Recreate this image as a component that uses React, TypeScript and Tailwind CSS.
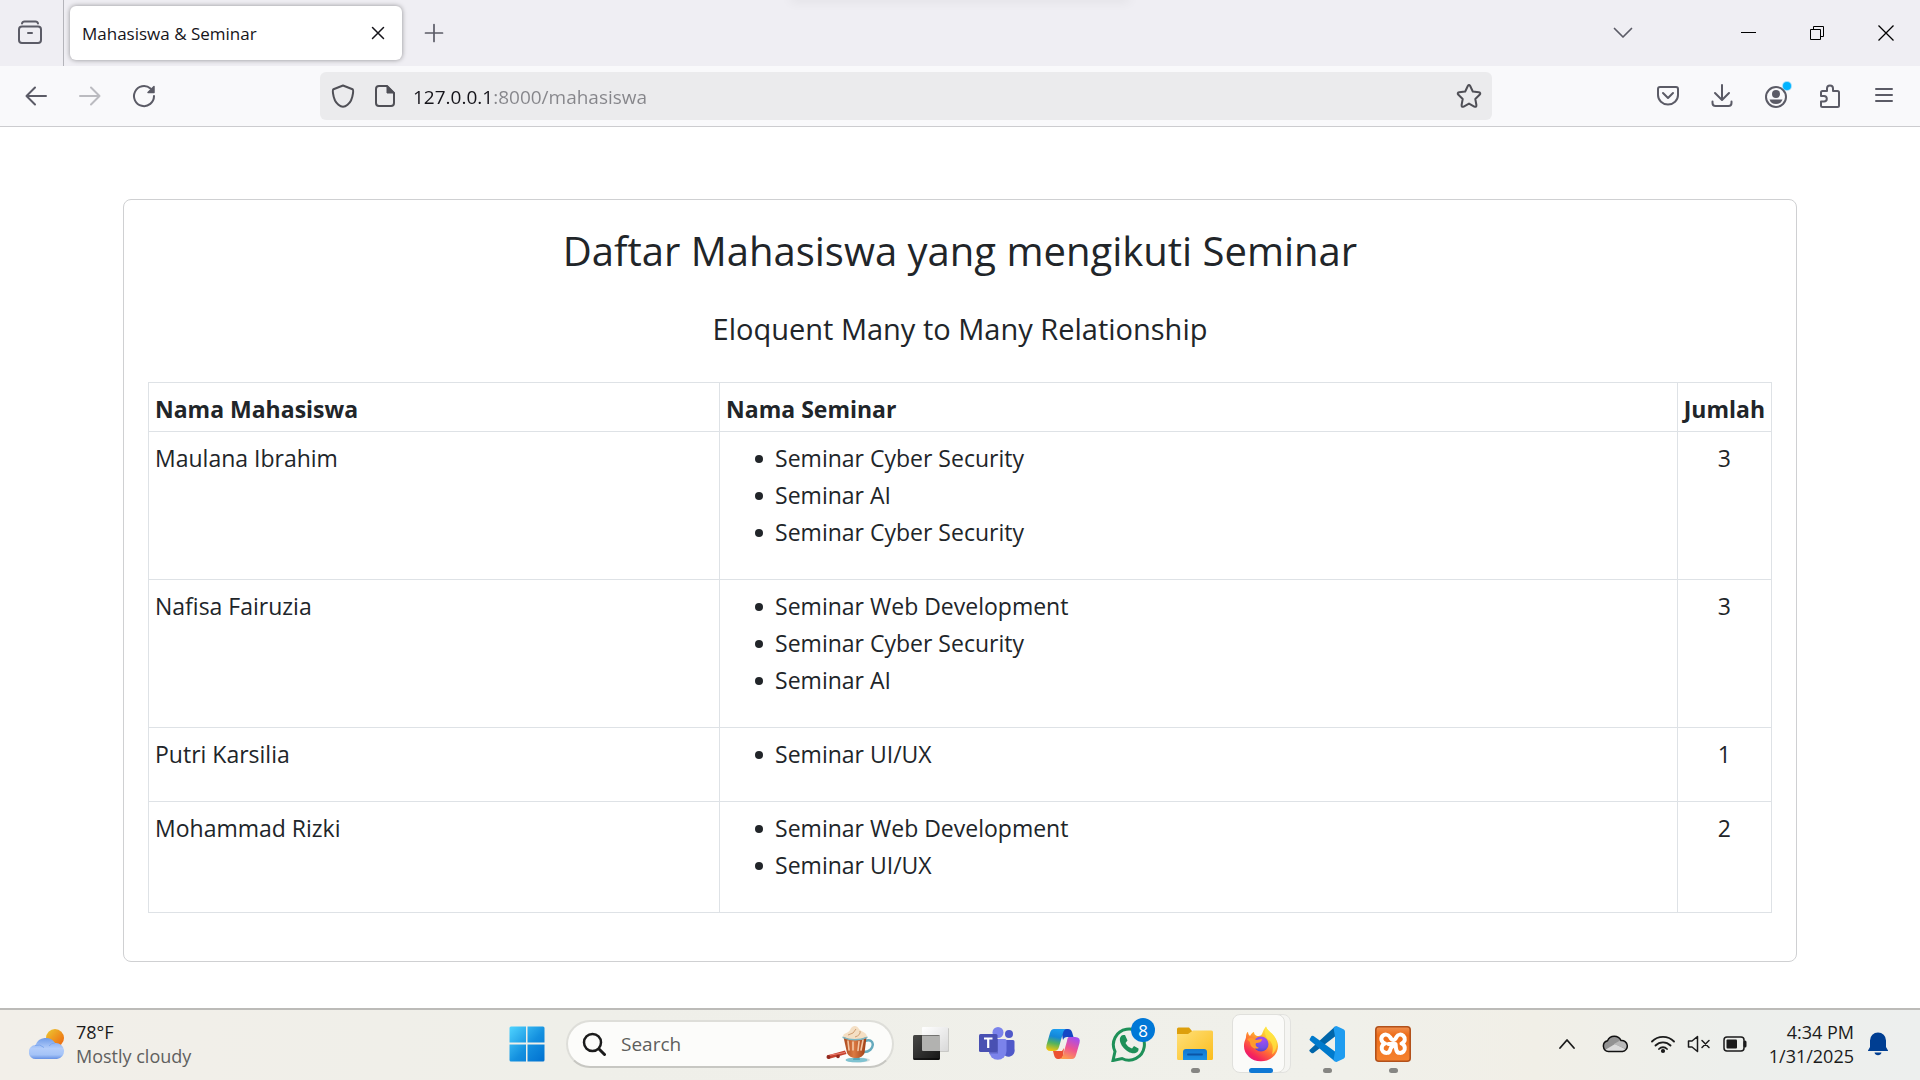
import React from "react";

type Student = { name: string; seminars: string[] };

const students: Student[] = [
  { name: "Maulana Ibrahim", seminars: ["Seminar Cyber Security", "Seminar AI", "Seminar Cyber Security"] },
  { name: "Nafisa Fairuzia", seminars: ["Seminar Web Development", "Seminar Cyber Security", "Seminar AI"] },
  { name: "Putri Karsilia", seminars: ["Seminar UI/UX"] },
  { name: "Mohammad Rizki", seminars: ["Seminar Web Development", "Seminar UI/UX"] },
];

type IconProps = { size?: number; className?: string; children: React.ReactNode };

function Icon({ size = 24, className = "", children }: IconProps) {
  return (
    <svg
      width={size}
      height={size}
      viewBox={`0 0 ${size} ${size}`}
      fill="none"
      stroke="currentColor"
      strokeWidth="2"
      strokeLinecap="round"
      strokeLinejoin="round"
      className={`shrink-0 ${className}`}
      aria-hidden="true"
    >
      {children}
    </svg>
  );
}

function TabBar() {
  return (
    <div className="relative flex h-[66px] overflow-hidden bg-[#efeef3] text-[#5b5b66]">
      <div className="absolute -top-1 left-1/2 h-1 w-[340px] -translate-x-1/2 rounded-full shadow-[0_0_12px_rgba(0,0,0,0.12)]" />
      <button aria-label="Firefox View" className="flex w-16 shrink-0 items-center justify-center border-r border-[#b4b4ba] pr-1">
        <Icon size={26}>
          <path d="M5 3.5Q5.500 1.500 7.500 1.500H18.500Q20.500 1.500 21 3.500" />
          <rect x="2" y="6.500" width="22" height="16.500" rx="3" />
          <path d="M11 13h4" />
        </Icon>
      </button>
      <div className="ml-1.5 mt-1.5 flex h-[54px] w-[332px] items-center justify-between rounded-md bg-white pl-3 pr-3 text-[#15141a] shadow-[0_0_5px_rgba(0,0,0,0.4)]">
        <span className="pt-0.5 text-[17px]">Mahasiswa &amp; Seminar</span>
        <button aria-label="Close tab" className="flex size-6 items-center justify-center">
          <Icon size={14}>
            <path d="M1.500 1.500l11 11M12.500 1.500l-11 11" strokeWidth="1.500" />
          </Icon>
        </button>
      </div>
      <button aria-label="New tab" className="ml-5 flex w-6 items-center justify-center">
        <Icon size={20}>
          <path d="M10 1.500v17M1.500 10h17" strokeWidth="1.700" />
        </Icon>
      </button>
      <div className="ml-auto flex">
        <button aria-label="List all tabs" className="mr-[67px] flex w-12 items-center justify-center">
          <Icon size={20}>
            <path d="M1.500 5.500l8.500 8.500 8.500-8.500" strokeWidth="1.700" />
          </Icon>
        </button>
        <button aria-label="Minimize" className="flex w-[69px] items-center justify-center text-black">
          <svg width="16" height="16" aria-hidden="true"><path d="M0 7.500h15" stroke="currentColor" /></svg>
        </button>
        <button aria-label="Restore" className="flex w-[69px] items-center justify-center text-black">
          <svg width="16" height="16" fill="none" stroke="currentColor" aria-hidden="true">
            <path d="M.5 4.500h10v10H.5zM3.500 4.500v-3h10v10h-3" />
          </svg>
        </button>
        <button aria-label="Close" className="flex w-[68px] items-center justify-center text-black">
          <svg width="16" height="16" fill="none" stroke="currentColor" strokeWidth="1.300" aria-hidden="true">
            <path d="M.5.5l15 15M15.500.5l-15 15" />
          </svg>
        </button>
      </div>
    </div>
  );
}

function NavBar() {
  return (
    <div className="flex h-[61px] items-center border-b border-[#cccccf] bg-[#f9f9fb] text-[#5b5b66]">
      <div className="flex w-[320px] shrink-0 pl-[9px]">
        <button aria-label="Back" className="flex w-[54px] items-center justify-center">
          <Icon>
            <path d="M22 12H2.500M11 3.500L2.500 12l8.500 8.500" />
          </Icon>
        </button>
        <button aria-label="Forward" className="flex w-[54px] items-center justify-center text-[#bbbbc0]" disabled>
          <Icon>
            <path d="M2 12h19.500M13 3.500l8.500 8.500-8.500 8.500" />
          </Icon>
        </button>
        <button aria-label="Reload" className="flex w-[54px] items-center justify-center">
          <Icon>
            <path d="M22 12a10 10 0 1 1-3.500-7.500" />
            <path d="M22 2.500v6h-6z" fill="currentColor" strokeWidth="1.500" />
          </Icon>
        </button>
      </div>
      <div className="flex h-12 flex-1 items-center rounded-md bg-[#ebebed] pl-[11px] pr-[10px] text-[#4f4f56]">
        <Icon size={24}>
          <path d="M12 1.500L21.500 5.200C22.800 5.700 22 12 20 16.500 18.500 19.500 15 22.800 12 22.800S5.500 19.500 4 16.500C2 12 1.200 5.700 2.500 5.200z" />
        </Icon>
        <Icon size={24} className="ml-[18px]">
          <path d="M14 2H6a3 3 0 0 0-3 3v14a3 3 0 0 0 3 3h12a3 3 0 0 0 3-3V9z" />
          <path d="M14 2v7h7z" fill="currentColor" strokeWidth="1" />
        </Icon>
        <input
          aria-label="Address"
          defaultValue="127.0.0.1:8000/mahasiswa"
          className="ml-4 min-w-0 flex-1 bg-[linear-gradient(to_right,#15141a_79px,#85858a_79px)] bg-clip-text pt-0.5 text-[19px] text-transparent outline-none"
        />
        <button aria-label="Bookmark this page" className="flex size-[26px] items-center justify-center">
          <Icon size={26}>
            <path d="M11.800 3Q13 1 14.200 3L16.800 8.500 22.800 9.300Q25.300 9.900 23.600 11.800L19.300 16 20.400 22Q20.600 24.500 18.300 23.600L13 20.600 7.700 23.600Q5.400 24.500 5.600 22L6.700 16 2.400 11.800Q.7 9.900 3.200 9.300L9.200 8.500z" />
          </Icon>
        </button>
      </div>
      <div className="flex w-[428px] shrink-0 justify-end pr-[9px]">
        <button aria-label="Save to Pocket" className="flex w-[54px] items-center justify-center">
          <Icon>
            <path d="M4 3h16a2 2 0 0 1 2 2v6a10 9.500 0 0 1-20 0V5a2 2 0 0 1 2-2z" />
            <path d="M7 9l5 5 5-5" />
          </Icon>
        </button>
        <button aria-label="Downloads" className="flex w-[54px] items-center justify-center">
          <Icon>
            <path d="M12 1v14.500M5 9l7 7 7-7M2.500 17.500V19a3 3 0 0 0 3 3h13a3 3 0 0 0 3-3v-1.500" />
          </Icon>
        </button>
        <button aria-label="Account" className="flex w-[54px] items-center justify-center">
          <svg width="32" height="32" className="shrink-0" aria-hidden="true">
            <circle cx="16" cy="17" r="10" fill="none" stroke="#5b5b66" strokeWidth="2" />
            <circle cx="16" cy="14" r="4" fill="#5b5b66" />
            <path d="M9.500 19.500h13q-1.500 4.500-6.500 4.500t-6.500-4.500z" fill="#5b5b66" />
            <circle cx="27" cy="6" r="5" fill="#00b3ff" fillOpacity=".35" />
            <circle cx="27" cy="6" r="4" fill="#00b3ff" />
          </svg>
        </button>
        <button aria-label="Extensions" className="flex w-[54px] items-center justify-center">
          <Icon>
            <path d="M9 7V4.500a3 3 0 0 1 6 0V7h4.500A1.500 1.500 0 0 1 21 8.500V21.500A1.500 1.500 0 0 1 19.500 23H4.500A1.500 1.500 0 0 1 3 21.500V17.500H6a2.800 2.800 0 0 0 0-5.600H3V8.500A1.500 1.500 0 0 1 4.500 7z" />
          </Icon>
        </button>
        <button aria-label="Open application menu" className="flex w-[54px] items-center justify-center">
          <Icon size={20}>
            <path d="M2 3h16M2 9h16M2 15h16" />
          </Icon>
        </button>
      </div>
    </div>
  );
}

function SeminarCard() {
  return (
    <section className="rounded-lg border border-[#cfd0d2] p-6 text-[#212529]">
      <h1 className="text-center text-[40px] leading-[54px]">Daftar Mahasiswa yang mengikuti Seminar</h1>
      <h2 className="mt-8 text-center text-[29px] leading-[37px]">Eloquent Many to Many Relationship</h2>
      <table className="mb-6 mt-[35px] w-full border-collapse text-[23px] leading-[37px]">
        <thead>
          <tr>
            <th className="border border-[#dee2e6] px-1.5 pb-[3px] pt-2 text-left font-bold">Nama Mahasiswa</th>
            <th className="w-[59%] border border-[#dee2e6] px-1.5 pb-[3px] pt-2 text-left font-bold">Nama Seminar</th>
            <th className="w-[94px] border border-[#dee2e6] px-1.5 pb-[3px] pt-2 text-center font-bold">Jumlah</th>
          </tr>
        </thead>
        <tbody>
          {students.map((s) => (
            <tr key={s.name} className="align-top">
              <td className="border border-[#dee2e6] px-1.5 pb-[3px] pt-2">{s.name}</td>
              <td className="border border-[#dee2e6] px-1.5 pb-[3px] pt-2">
                <ul className="mb-[25px] pl-[29px]">
                  {s.seminars.map((seminar, i) => (
                    <li key={i} className="flex items-center gap-3 before:size-2 before:rounded-full before:bg-current">
                      {seminar}
                    </li>
                  ))}
                </ul>
              </td>
              <td className="border border-[#dee2e6] px-1.5 pb-[3px] pt-2 text-center">{s.seminars.length}</td>
            </tr>
          ))}
        </tbody>
      </table>
    </section>
  );
}

function Weather() {
  return (
    <button className="flex items-center gap-[11px] text-left">
      <svg width="36" height="32" viewBox="0 0 36 32" aria-hidden="true">
        <defs>
          <linearGradient id="sun" x1="0" y1="0" x2="1" y2="1">
            <stop offset="0.100" stopColor="#edc02e" />
            <stop offset="0.900" stopColor="#ee6a10" />
          </linearGradient>
          <linearGradient id="cloud" x1="0" y1="0" x2="0" y2="1">
            <stop offset="0" stopColor="#6f9be8" />
            <stop offset="0.500" stopColor="#b3cdfa" />
            <stop offset="0.800" stopColor="#a4c3f7" />
            <stop offset="1" stopColor="#6691e4" />
          </linearGradient>
        </defs>
        <circle cx="26" cy="10" r="9" fill="url(#sun)" />
        <path d="M7 31a7 7 0 0 1-.5-14A11 11 0 0 1 26 15a8 8 0 1 1 2 16z" fill="url(#cloud)" />
        <path d="M6 17.500q5-2 9 2M26 15q-4 0-6 3" stroke="#7ea7ee" fill="none" />
      </svg>
      <span className="flex flex-col text-lg leading-6">
        <span className="text-[#1b1b1b]">78°F</span>
        <span className="text-[#60605e]">Mostly cloudy</span>
      </span>
    </button>
  );
}

function StartIcon() {
  return (
    <svg width="36" height="36" viewBox="0 0 36 36" aria-hidden="true">
      <defs>
        <linearGradient id="win" x1="0" y1="0" x2="1" y2="1">
          <stop offset="0" stopColor="#4fd4ff" />
          <stop offset="0.550" stopColor="#1490df" />
          <stop offset="1" stopColor="#0070d0" />
        </linearGradient>
      </defs>
      <path d="M2 .5h15v16H.5V2A1.500 1.500 0 0 1 2 .5zM18.500.5H34A1.500 1.500 0 0 1 35.500 2v14.500h-17zM.5 18.500H17v17H2A1.500 1.500 0 0 1 .5 34zM18.500 18.500h17V34a1.500 1.500 0 0 1-1.500 1.500H18.500z" fill="url(#win)" />
    </svg>
  );
}

function DrinkIcon() {
  return (
    <svg width="48" height="37" viewBox="0 0 48 37" className="shrink-0" aria-hidden="true">
      <defs>
        <linearGradient id="cocoa" x1="0" y1="0" x2="1" y2="0">
          <stop offset="0" stopColor="#a9481d" />
          <stop offset="0.450" stopColor="#dc7a42" />
          <stop offset="1" stopColor="#9c3c14" />
        </linearGradient>
      </defs>
      <ellipse cx="32" cy="34" rx="12" ry="2.500" fill="#d5dcdc" />
      <path d="M39 15c11-4 10 11-1 11" fill="none" stroke="#66aabd" strokeWidth="2.500" />
      <path d="M1 29.500l18-5 1.500 3.500-18 5z" fill="#c5402d" />
      <path d="M2 29.500l17-3" stroke="#ec8273" strokeWidth="1" />
      <circle cx="2.500" cy="31" r="2" fill="#92291e" />
      <circle cx="12" cy="30.500" r="1.800" fill="#92291e" />
      <ellipse cx="30.500" cy="34" rx="11" ry="2.300" fill="#7fc3d1" />
      <path d="M28 30h5l1 4h-7z" fill="#58a6b8" />
      <path d="M17.500 11h23l-2 16q-2 5-8.500 5t-9-5z" fill="url(#cocoa)" />
      <path d="M22 15l1 9M27 16v8M33 15.500l-1 9M37 14l-2 10" stroke="#f3c7a5" strokeWidth="1.600" strokeLinecap="round" />
      <path d="M17 11c0-5 5-3 7-7 2-5 7-5 9-1 2 3 8 3 8 8q-12 5-24 0z" fill="#f4dfc4" />
      <path d="M22 9q6-1 8-6M29 11q6-2 5-6" stroke="#cf9d70" fill="none" />
      <path d="M16.500 10.500q12 5 25 0v1.500q-12 5-25 0z" fill="#7bb8c6" />
    </svg>
  );
}

function TaskViewIcon() {
  return (
    <svg width="36" height="36" viewBox="0 0 36 36" aria-hidden="true">
      <defs>
        <linearGradient id="tvDark" x1="0" y1="0" x2="1" y2="1">
          <stop offset="0" stopColor="#484846" />
          <stop offset="1" stopColor="#161616" />
        </linearGradient>
        <linearGradient id="tvLight" x1="0" y1="0" x2="1" y2="1">
          <stop offset="0" stopColor="#fff" />
          <stop offset="1" stopColor="#d9d9d9" />
        </linearGradient>
      </defs>
      <rect x="9" y="2" width="27" height="24" rx="1" fill="#c9c9c6" />
      <rect x="9" y="1" width="26" height="24" rx="1" fill="url(#tvLight)" />
      <rect x="0" y="9" width="27" height="25" rx="1.500" fill="url(#tvDark)" />
      <path d="M9 9.500h18V25H10a1 1 0 0 1-1-1z" fill="#b2b2b0" />
      <path d="M1 33h25" stroke="#000" />
    </svg>
  );
}

function TeamsIcon() {
  return (
    <svg width="36" height="36" viewBox="0 0 36 36" aria-hidden="true">
      <circle cx="30" cy="8" r="4" fill="#5059c9" />
      <path d="M23 14h11a1.500 1.500 0 0 1 1.500 1.500V23a6 6 0 0 1-12 3z" fill="#5059c9" />
      <circle cx="19" cy="6.500" r="5.500" fill="#7b83eb" />
      <path d="M10 13h16a1.500 1.500 0 0 1 1.500 1.500V25a8.500 8.500 0 0 1-17.500 0z" fill="#7b83eb" />
      <path d="M10 13h9v14.500h-8.800z" fill="#5f66c8" />
      <rect x="0" y="8" width="18.500" height="18" rx="1.500" fill="#4950b2" />
      <path d="M5 12.500h8.500M9.200 12.500v9.500" stroke="#fff" strokeWidth="2.200" fill="none" />
    </svg>
  );
}

function CopilotIcon() {
  return (
    <svg width="36" height="34" viewBox="0 0 36 34" aria-hidden="true">
      <defs>
        <linearGradient id="coA" x1="0.500" y1="0" x2="0.300" y2="1">
          <stop offset="0" stopColor="#1b9df0" />
          <stop offset="0.350" stopColor="#1487d8" />
          <stop offset="0.650" stopColor="#52b35e" />
          <stop offset="1" stopColor="#f3c50d" />
        </linearGradient>
        <linearGradient id="coB" x1="0.700" y1="0" x2="0.300" y2="1">
          <stop offset="0" stopColor="#a44df0" />
          <stop offset="0.500" stopColor="#ee5490" />
          <stop offset="1" stopColor="#ffa04d" />
        </linearGradient>
      </defs>
      <path d="M16 2h7q3 0 4 3l1.500 5H22q-3 0-4 3z" fill="#1647c4" />
      <path d="M8 24h9l2-3-1 8q-1 3-4 3h-1q-3 0-4-4z" fill="#ec5032" />
      <path d="M9 2h13q-3 0-4 4l-4 14q-1 4-5 4H6q-6 0-4.500-6L5 6q1-4 4-4z" fill="url(#coA)" />
      <path d="M24 10h6q6 0 4.500 6L31 28q-1 4-4 4H14q3 0 4-4l4-14q.5-4 2-4z" fill="url(#coB)" />
    </svg>
  );
}

function WhatsAppIcon() {
  return (
    <span className="relative flex">
      <svg width="36" height="36" viewBox="0 0 36 36" aria-hidden="true">
        <path d="M2 34.500l2-9A15.500 15.500 0 1 1 11 32.500z" fill="none" stroke="#1e9058" strokeWidth="3" />
        <path d="M9 12q1-3 3-3h2l2.500 5.500-2 2.500q2 4 6.500 5.500l2-2.500 4.500 2.500q.5 3-3 4.500c-7 2-17-8-15.500-15z" fill="#1e9058" />
      </svg>
      <span className="absolute -right-2 -top-2 flex size-6 items-center justify-center rounded-full bg-[#0078d7] text-[17px] leading-none text-white">8</span>
    </span>
  );
}

function FolderIcon() {
  return (
    <svg width="36" height="36" viewBox="0 0 36 36" aria-hidden="true">
      <defs>
        <linearGradient id="fold" x1="0" y1="0" x2="1" y2="1">
          <stop offset="0" stopColor="#ffe07a" />
          <stop offset="1" stopColor="#fbbd1c" />
        </linearGradient>
        <linearGradient id="foldBlue" x1="0" y1="0" x2="0" y2="1">
          <stop offset="0" stopColor="#1377cf" />
          <stop offset="1" stopColor="#1b90e5" />
        </linearGradient>
      </defs>
      <path d="M0 3q0-1.500 1.500-1.500H12L15 5v4H0z" fill="#dd9f0c" />
      <path d="M0 8h11l5-3.500h18.500Q36 4.500 36 6v26.500q0 1.500-1.500 1.500h-33Q0 34 0 32.500z" fill="url(#fold)" />
      <path d="M6 34V26q0-3 3-3h18q3 0 3 3v8z" fill="url(#foldBlue)" />
      <path d="M11 28.500h14" stroke="#0b55a5" strokeWidth="1.800" strokeLinecap="round" />
    </svg>
  );
}

function FirefoxIcon() {
  return (
    <svg width="36" height="36" viewBox="0 0 36 36" aria-hidden="true">
      <defs>
        <linearGradient id="fx" x1="0.850" y1="0" x2="0.200" y2="1">
          <stop offset="0.050" stopColor="#fff44f" />
          <stop offset="0.350" stopColor="#ffb82e" />
          <stop offset="0.600" stopColor="#ff6b36" />
          <stop offset="0.850" stopColor="#f5245c" />
          <stop offset="1" stopColor="#e01587" />
        </linearGradient>
        <radialGradient id="fxGlobe" cx="0.600" cy="0.200" r="0.900">
          <stop offset="0" stopColor="#a84bf0" />
          <stop offset="0.600" stopColor="#7450e6" />
          <stop offset="1" stopColor="#5340b8" />
        </radialGradient>
      </defs>
      <path d="M23 .5c1 4 6 6 9 11 2 3 3 6 3 9A17 15 0 0 1 1 20c0-5 2-7 2-9 0-3 1-5 2-5 0 2 1 3 2 4 1-2 3-4 4-4 0 2 1 3 3 4 2 0 4 0 5-2 1-3 2-5 4-7.500z" fill="url(#fx)" />
      <path d="M23 .5c1 4 6 6 9 11 3 6 2 13-3 17 2-8 0-13-4-15-3-3-4-8-2-13z" fill="#ffe543" fillOpacity=".75" />
      <circle cx="18" cy="18" r="7.500" fill="url(#fxGlobe)" />
      <path d="M4 13c4-2 7-1 9 1l6-1c0 3-3 4-6 4-1 2 0 4 3 5-6 2-9-2-9-6z" fill="#ff9a2e" />
    </svg>
  );
}

function VSCodeIcon() {
  return (
    <svg width="36" height="36" viewBox="0 0 36 36" aria-hidden="true">
      <path d="M1 23.500L26 .5v10L4.500 27q-1 .6-2 0L.8 25.500q-1-1 .2-2z" fill="#0065a9" />
      <path d="M1 12.500l1.500-2.500q1-.6 2 0L26 25.500v10L1 14.500q-1-1 0-2z" fill="#007acc" />
      <path d="M26 .5q.8-.7 2-.2l6.500 3q1.500.7 1.500 2.200v25q0 1.500-1.500 2.200l-6.500 3q-1.200.5-2-.2L24.500 34 26 25.500v-15L24.500 2z" fill="#1f9cf0" />
    </svg>
  );
}

function XamppIcon() {
  return (
    <svg width="36" height="36" viewBox="0 0 36 36" aria-hidden="true">
      <defs>
        <linearGradient id="xa" x1="0" y1="0" x2="0" y2="1">
          <stop offset="0" stopColor="#f09050" />
          <stop offset="0.250" stopColor="#ee6c18" />
          <stop offset="1" stopColor="#f5822f" />
        </linearGradient>
      </defs>
      <rect x=".8" y=".8" width="34.400" height="34.400" rx="3" fill="url(#xa)" stroke="#b2511b" strokeWidth="1.600" />
      <path d="M10 17.500C6 16 5.500 12 7.500 10s5.500-2 7.500 1c1 2 2 3 3.500 3s2-1 3-3c1.500-3 5-3 7-1s2 6-2 7.500c4 1.500 4 6 2 8s-6 2-7-1-.500-4-1-6.500l-7 0M10 17.500c-4 1.500-4 6-2 8s6 2 7-1 .5-3 2-3.500" fill="none" stroke="#fff" strokeWidth="4" strokeLinecap="round" strokeLinejoin="round" />
    </svg>
  );
}

type AppButtonProps = { label: string; state?: "none" | "running" | "active"; children: React.ReactNode };

function AppButton({ label, state = "none", children }: AppButtonProps) {
  return (
    <button aria-label={label} className="relative flex h-[68px] w-[66px] shrink-0 items-center justify-center">
      {state === "active" && (
        <>
          <span className="absolute left-3 top-1 h-[59px] w-[51px] rounded-lg border border-[#e2e2df] bg-[#f5f5f2]" />
          <span className="absolute left-1 top-1 h-[59px] w-[53px] rounded-lg border border-[#e0e0dc] bg-[#fbfbf9]" />
          <span className="absolute bottom-[5px] left-[21px] h-[5px] w-6 rounded-full bg-[#0f78d4]" />
        </>
      )}
      {state === "running" && <span className="absolute bottom-[5px] h-[5px] w-[9px] rounded-full bg-[#868683]" />}
      <span className="relative">{children}</span>
    </button>
  );
}

function Tray() {
  return (
    <div className="flex items-center text-[#1b1b1b]">
      <button aria-label="Show hidden icons" className="flex w-12 items-center justify-center">
        <Icon size={18}>
          <path d="M2 13l7-8 7 8" strokeWidth="1.800" />
        </Icon>
      </button>
      <button aria-label="OneDrive" className="flex w-12 items-center justify-center">
        <svg width="26" height="20" viewBox="0 0 26 20" aria-hidden="true">
          <path d="M6.500 17.500a5.500 5.500 0 0 1-1-10.800A7.500 7.500 0 0 1 19 6.500a5.500 5.500 0 0 1 1.500 11z" fill="#939393" />
          <path d="M3 16l10-6 11 5.500q-1 2-3.500 2h-14q-2 0-3.500-1.500z" fill="#dcdcdc" />
          <path d="M12 10l6-3.500q7 .5 7 5.500 0 2-1 3z" fill="#b9b9b9" />
          <path d="M6.500 17.500a5.500 5.500 0 0 1-1-10.800A7.500 7.500 0 0 1 19 6.500a5.500 5.500 0 0 1 1.500 11z" fill="none" stroke="#111" strokeWidth="1.500" />
        </svg>
      </button>
      <button aria-label="Network, volume and battery" className="ml-3 flex items-center gap-3">
        <svg width="24" height="20" viewBox="0 0 24 20" fill="none" stroke="currentColor" strokeWidth="1.800" strokeLinecap="round" aria-hidden="true">
          <path d="M1 7.500a15.500 15.500 0 0 1 22 0M4.500 11.500a10.500 10.500 0 0 1 15 0M8 15a5.500 5.500 0 0 1 8 0" />
          <circle cx="12" cy="17" r="1.200" fill="currentColor" />
        </svg>
        <svg width="24" height="20" viewBox="0 0 24 20" fill="none" stroke="currentColor" strokeWidth="1.500" strokeLinecap="round" strokeLinejoin="round" aria-hidden="true">
          <path d="M1.500 7v6H5l5.500 4.500v-15L5 7zM15 6.500l7 7M22 6.500l-7 7" />
        </svg>
        <svg width="25" height="20" viewBox="0 0 25 20" aria-hidden="true">
          <rect x="1" y="3" width="20" height="14" rx="3" fill="none" stroke="currentColor" strokeWidth="1.500" />
          <rect x="3.500" y="5.500" width="10.500" height="9" rx="1" fill="currentColor" />
          <path d="M22 8v4" stroke="currentColor" strokeWidth="3" strokeLinecap="round" />
        </svg>
      </button>
      <button className="ml-[22px] flex w-[84px] flex-col items-end text-lg leading-6 whitespace-nowrap">
        <span>4:34 PM</span>
        <span>1/31/2025</span>
      </button>
      <button aria-label="Notifications" className="ml-3.5 mr-8 text-[#003e92]">
        <svg width="20" height="24" viewBox="0 0 20 24" fill="currentColor" aria-hidden="true">
          <path d="M10 .5a8 8 0 0 1 8 8V15l2 3.500v.5H0v-.5L2 15V8.500a8 8 0 0 1 8-8zM6.500 20.500h7a3.600 3.600 0 0 1-7 0z" />
        </svg>
      </button>
    </div>
  );
}

function Taskbar() {
  return (
    <footer className="grid h-[72px] grid-cols-[1fr_auto_1fr] items-center border-t-2 border-[#bcbbb8] bg-[linear-gradient(to_right,#f2efe9,#efefe9_30%,#f0f0ea_70%,#f1efe7_80%,#edefec_90%,#edefee)] pb-0.5">
      <div className="pl-[29px]">
        <Weather />
      </div>
      <div className="flex items-center">
        <AppButton label="Start">
          <StartIcon />
        </AppButton>
        <label className="ml-1.5 mr-1 flex h-12 w-[328px] items-center rounded-full border-2 border-[#deded9] border-b-[#c7c7c2] bg-[#fcfcfa] pl-3.5 pr-[18px]">
          <Icon size={24} className="text-[#1b1b1b]">
            <circle cx="10.500" cy="10.500" r="8.500" strokeWidth="2.500" />
            <path d="M17 17l5.500 5.500" strokeWidth="3" />
          </Icon>
          <input aria-label="Search" placeholder="Search" className="ml-[15px] min-w-0 flex-1 bg-transparent text-[19px] outline-none placeholder:text-[#5e5e5c]" />
          <DrinkIcon />
        </label>
        <AppButton label="Task View"><TaskViewIcon /></AppButton>
        <AppButton label="Microsoft Teams"><TeamsIcon /></AppButton>
        <AppButton label="Copilot"><CopilotIcon /></AppButton>
        <AppButton label="WhatsApp"><WhatsAppIcon /></AppButton>
        <AppButton label="File Explorer" state="running"><FolderIcon /></AppButton>
        <AppButton label="Firefox" state="active"><FirefoxIcon /></AppButton>
        <AppButton label="Visual Studio Code" state="running"><VSCodeIcon /></AppButton>
        <AppButton label="XAMPP" state="running"><XamppIcon /></AppButton>
      </div>
      <div className="flex justify-end">
        <Tray />
      </div>
    </footer>
  );
}

export default function App() {
  return (
    <div className="flex min-h-screen flex-col bg-white font-['Open_Sans','Noto_Sans',sans-serif]">
      <header>
        <TabBar />
        <NavBar />
      </header>
      <main className="flex-1 px-[123px] pt-[72px]">
        <SeminarCard />
      </main>
      <Taskbar />
    </div>
  );
}
